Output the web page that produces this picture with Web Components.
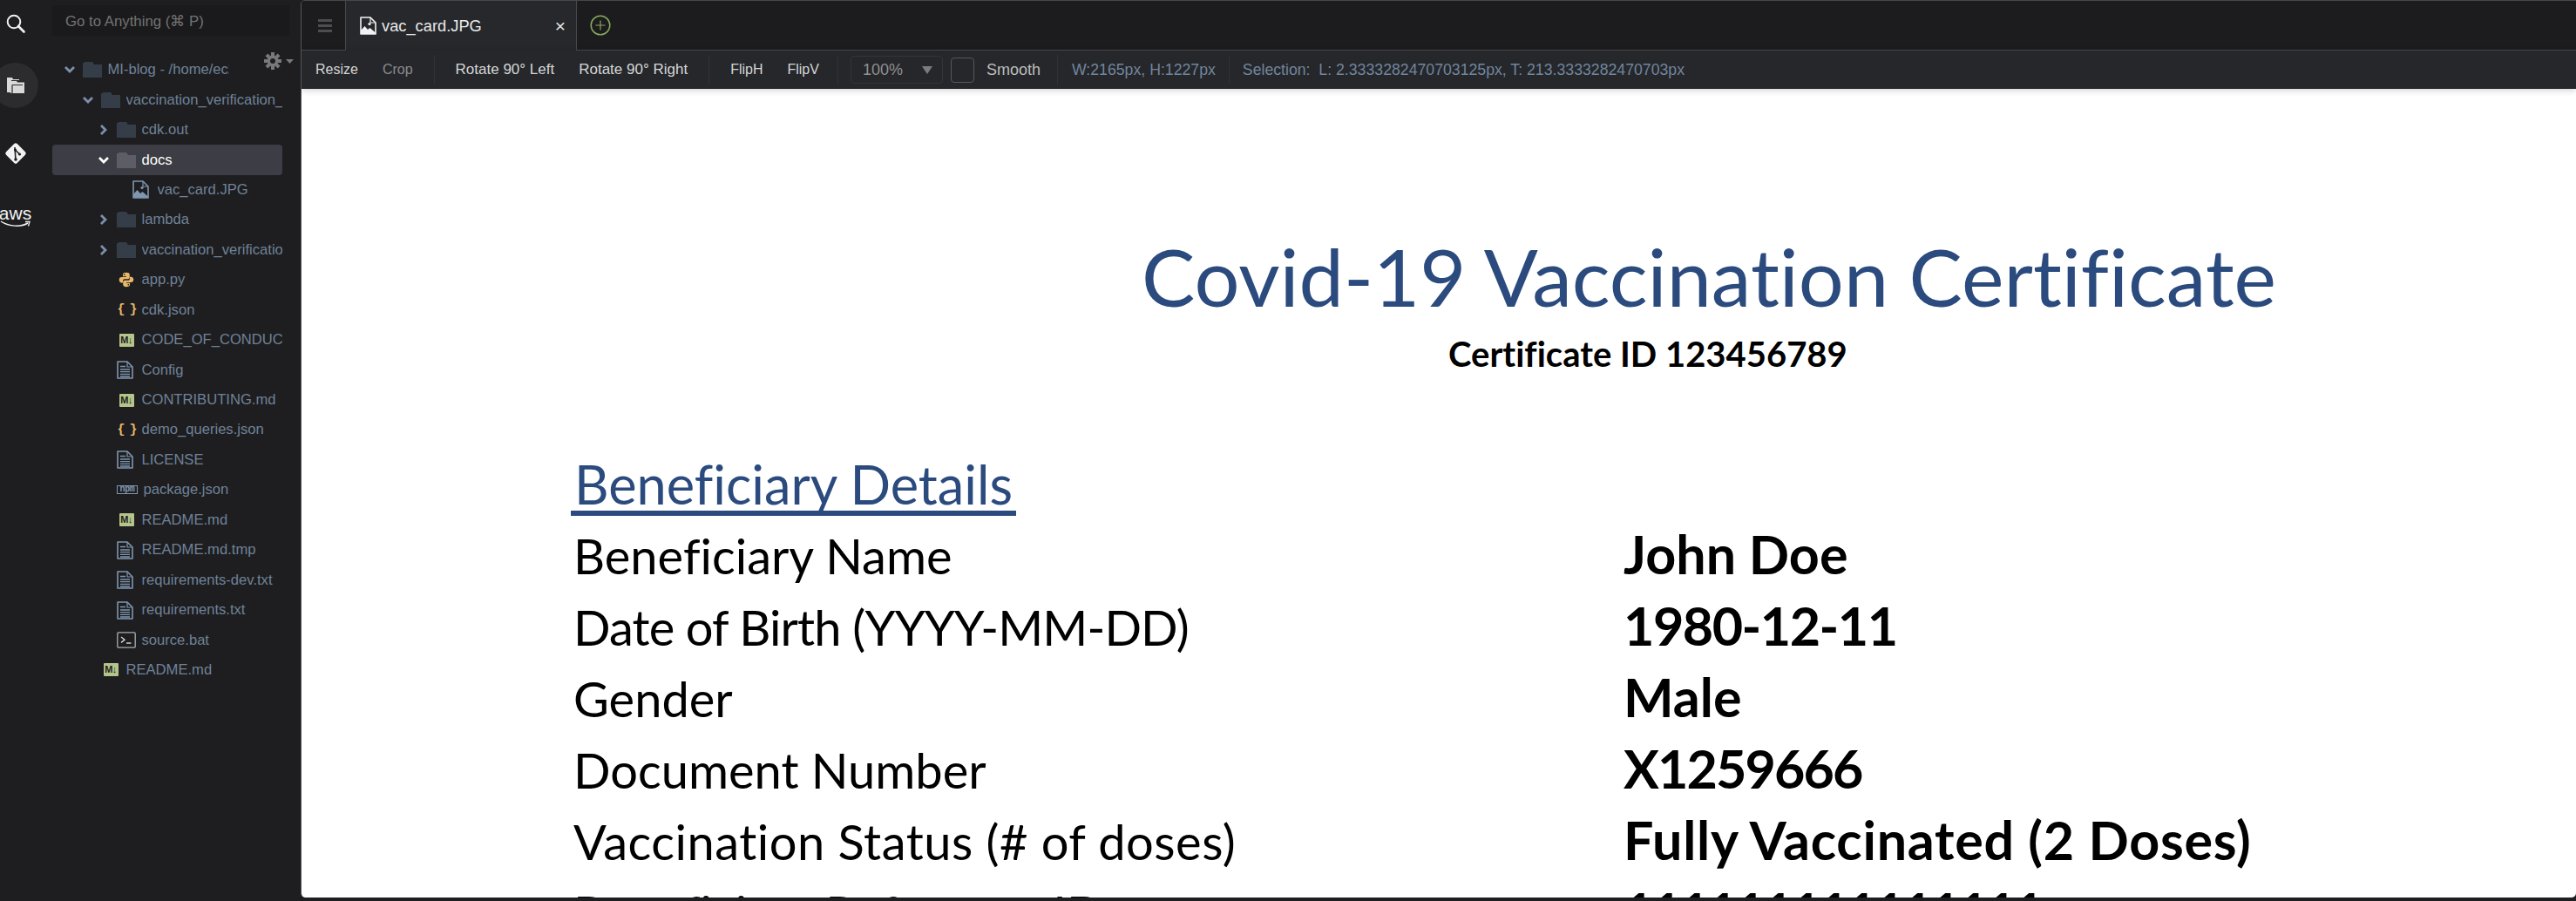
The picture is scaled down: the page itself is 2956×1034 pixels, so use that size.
<!DOCTYPE html>
<html>
<head>
<meta charset="utf-8">
<title>vac_card.JPG</title>
<style>
  html, body { margin: 0; height: 100%; background: #1e1e20; overflow: hidden; }
</style>
</head>
<body>
<app-shell>
  <side-rail slot="rail"></side-rail>
  <file-panel slot="panel">
    <tree-row indent="12" chev="open" icon="folder" clip="139">MI-blog - /home/ec2-user</tree-row>
    <tree-row indent="33" chev="open" icon="folder">vaccination_verification_sample</tree-row>
    <tree-row indent="51" chev="closed" icon="folder">cdk.out</tree-row>
    <tree-row indent="51" chev="open" icon="folder" selected>docs</tree-row>
    <tree-row indent="69" icon="image">vac_card.JPG</tree-row>
    <tree-row indent="51" chev="closed" icon="folder">lambda</tree-row>
    <tree-row indent="51" chev="closed" icon="folder">vaccination_verification_sample</tree-row>
    <tree-row indent="51" icon="python">app.py</tree-row>
    <tree-row indent="51" icon="json">cdk.json</tree-row>
    <tree-row indent="51" icon="md">CODE_OF_CONDUCT.md</tree-row>
    <tree-row indent="51" icon="file">Config</tree-row>
    <tree-row indent="51" icon="md">CONTRIBUTING.md</tree-row>
    <tree-row indent="51" icon="json">demo_queries.json</tree-row>
    <tree-row indent="51" icon="file">LICENSE</tree-row>
    <tree-row indent="51" icon="npm">package.json</tree-row>
    <tree-row indent="51" icon="md">README.md</tree-row>
    <tree-row indent="51" icon="file">README.md.tmp</tree-row>
    <tree-row indent="51" icon="file">requirements-dev.txt</tree-row>
    <tree-row indent="51" icon="file">requirements.txt</tree-row>
    <tree-row indent="51" icon="term">source.bat</tree-row>
    <tree-row indent="33" icon="md">README.md</tree-row>
  </file-panel>
  <editor-pane slot="main">
    <tab-strip slot="tabs">vac_card.JPG</tab-strip>
    <image-tools slot="tools"></image-tools>
    <doc-sheet slot="doc">
      <doc-row name="Beneficiary Name">John Doe</doc-row>
      <doc-row name="Date of Birth (YYYY-MM-DD)" ktrack="-.87" vtrack="-1.5">1980-12-11</doc-row>
      <doc-row name="Gender">Male</doc-row>
      <doc-row name="Document Number" vtrack="-1.9">X1259666</doc-row>
      <doc-row name="Vaccination Status (# of doses)" ktrack=".49" vtrack=".72">Fully Vaccinated (2 Doses)</doc-row>
      <doc-row name="Beneficiary Reference ID" vtrack="-3.4">111111111111111</doc-row>
    </doc-sheet>
  </editor-pane>
</app-shell>

<script>
const UI_FONT = '"Liberation Sans", Arial, sans-serif';

// small svg icons for the tree, keyed by the icon attribute
const pageOutline = (c) => `<path d="M1 1h11l6 6v13H1z" fill="none" stroke="${c}" stroke-width="1.6" stroke-linejoin="round"/><path d="M12 1v6h6" fill="none" stroke="${c}" stroke-width="1.2"/>`;
const imageIcon = (c) => `<svg width="19" height="21" viewBox="0 0 19 21">${pageOutline(c)}<circle cx="11" cy="8.5" r="1.6" fill="${c}"/><path d="M1 20v-4l4.5-5 3.5 4 2.5-2 7 6v1z" fill="${c}"/></svg>`;

const ICONS = {
  folder: (c) => `<svg width="22" height="18" viewBox="0 0 22 18"><path d="M0 18V1h2V0h9l2 3h9v15z" fill="${c}"/></svg>`,
  image: () => imageIcon("#7f96b0"),
  file: () => `<svg width="19" height="21" viewBox="0 0 19 21">${pageOutline("#7f96b0")}<path d="M4 6.5h6M4 10h11M4 12.7h11M4 15.4h11M4 18h11" stroke="#7f96b0" stroke-width="1.3"/></svg>`,
  term: () => `<svg width="22" height="19" viewBox="0 0 22 19"><rect x=".8" y=".8" width="20.4" height="17.4" rx="1.2" fill="none" stroke="#a9adb3" stroke-width="1.3"/><path d="M5 6l4 3.2-4 3.2" fill="none" stroke="#d5d7da" stroke-width="1.4"/><path d="M11 13h5.5" stroke="#d5d7da" stroke-width="1.4"/></svg>`,
  python: () => `<svg width="18" height="18" viewBox="0 0 24 24"><path id="p" fill="#e8b76c" d="M12 1C8.5 1 6.6 2 6.6 4.200V7H12v1H4.500C2.400 8 1 9.700 1 12.200S2.400 16.500 4.500 16.500H6.700v-2.800c0-1.600 1.300-2.800 2.800-2.800h5c1.400 0 2.500-1.100 2.500-2.500V4.200C17 2 15.300 1 12 1z"/><use href="#p" transform="rotate(180 12 12)"/><circle cx="9" cy="4.200" r="1.100" fill="#1e1e20"/><circle cx="15" cy="19.800" r="1.100" fill="#1e1e20"/></svg>`
};

customElements.define("app-shell", class extends HTMLElement {
  constructor() {
    super();
    this.attachShadow({ mode: "open" }).innerHTML = `
      <style>
        :host { display: grid; grid-template-columns: 60px 285px 1fr; height: 1034px; background: #1e1e20; font-family: ${UI_FONT}; overflow: hidden; }
      </style>
      <slot name="rail"></slot>
      <slot name="panel"></slot>
      <slot name="main"></slot>`;
  }
});

customElements.define("rail-item", class extends HTMLElement {
  constructor() {
    super();
    this.attachShadow({ mode: "open" }).innerHTML = `
      <style>
        :host { display: flex; flex-direction: column; align-items: center; justify-content: center; width: 53px; height: 52px; margin-left: -9px; border-radius: 50%; color: #f2f2f2; }
        :host([active]) { background: #2c2c2e; }
      </style>
      <slot></slot>`;
  }
});

customElements.define("side-rail", class extends HTMLElement {
  constructor() {
    super();
    this.attachShadow({ mode: "open" }).innerHTML = `
      <style>
        :host { display: flex; flex-direction: column; padding-top: 1px; overflow: hidden; }
        .aws { font: 21px/16px "Liberation Sans", sans-serif; color: #f2f2f2; margin-top: -2px; }
        svg { display: block; }
      </style>
      <rail-item>
        <svg width="24" height="24" viewBox="0 0 24 24"><circle cx="10" cy="10" r="7.300" fill="none" stroke="#f2f2f2" stroke-width="2"/><path d="M15 15l6.500 6.500" stroke="#f2f2f2" stroke-width="2.600" stroke-linecap="round"/></svg>
      </rail-item>
      <rail-item active style="margin-top:19px">
        <svg width="22" height="20" viewBox="0 0 22 20"><path d="M1 1h6l1 2h7v1H6v14H1z" fill="#d9d9d9"/><path d="M5 7V5h7l1 1.500h8V19H5z" fill="#d9d9d9"/><path d="M7 9.500h12M7 9.500V19" stroke="#2c2c2e" stroke-width="1.200"/></svg>
      </rail-item>
      <rail-item style="margin-top:26px">
        <svg width="28" height="28" viewBox="0 0 28 28"><rect x="5" y="5" width="18" height="18" rx="2.500" transform="rotate(45 14 14)" fill="#f2f2f2"/><path d="M13 7l1 15M13.500 10l5 5" stroke="#1e1e20" stroke-width="1.600" fill="none"/><circle cx="13.500" cy="10" r="1.600" fill="#1e1e20"/><circle cx="18.500" cy="15" r="1.600" fill="#1e1e20"/><circle cx="14" cy="21" r="1.800" fill="#1e1e20"/></svg>
      </rail-item>
      <rail-item style="margin-top:22px">
        <span class="aws">aws</span>
        <svg width="36" height="9" viewBox="0 0 36 9"><path d="M1 1c9 6 23 7 31 2" fill="none" stroke="#f2f2f2" stroke-width="1.500"/><path d="M29 1.500h5l-1.500 5" fill="none" stroke="#f2f2f2" stroke-width="1.300"/></svg>
      </rail-item>`;
  }
});

customElements.define("file-panel", class extends HTMLElement {
  constructor() {
    super();
    this.attachShadow({ mode: "open" }).innerHTML = `
      <style>
        :host { display: block; position: relative; }
        .go { box-sizing: border-box; height: 35px; margin: 6px 13px 0 0; padding-left: 15px; background: #1a1a1c; color: #737373; font-size: 16.800px; line-height: 37px; }
        .tree { margin-top: 22px; width: 264px; display: flex; flex-direction: column; }
        .gear { position: absolute; left: 243px; top: 60px; display: flex; align-items: center; gap: 5px; }
      </style>
      <div class="go">Go to Anything (⌘ P)</div>
      <div class="gear">
        <svg width="20" height="20" viewBox="0 0 20 20"><g fill="#77797c"><circle cx="10" cy="10" r="6.500"/><path id="t" d="M8 0h4v4H8z"/><use href="#t" transform="rotate(45 10 10)"/><use href="#t" transform="rotate(90 10 10)"/><use href="#t" transform="rotate(135 10 10)"/><use href="#t" transform="rotate(180 10 10)"/><use href="#t" transform="rotate(225 10 10)"/><use href="#t" transform="rotate(270 10 10)"/><use href="#t" transform="rotate(315 10 10)"/></g><circle cx="10" cy="10" r="3" fill="#1e1e20"/></svg>
        <svg width="9" height="5" viewBox="0 0 9 5"><path d="M0 0h9L4.500 5z" fill="#77797c"/></svg>
      </div>
      <div class="tree"><slot></slot></div>`;
  }
});

customElements.define("tree-row", class extends HTMLElement {
  constructor() {
    super();
    const sel = this.hasAttribute("selected");
    const chev = this.getAttribute("chev");
    const kind = this.getAttribute("icon");
    const c = sel ? "#fff" : "#7b91ab";
    let arrow = "";
    if (chev == "open") arrow = `<svg width="14" height="10" viewBox="0 0 14 10"><path d="M2 2l5 5 5-5" fill="none" stroke="${c}" stroke-width="2.800"/></svg>`;
    if (chev == "closed") arrow = `<svg width="10" height="14" viewBox="0 0 10 14"><path d="M2 2l5 5-5 5" fill="none" stroke="${c}" stroke-width="2.800"/></svg>`;
    let icon;
    if (kind == "folder") icon = ICONS.folder(sel ? "#5c5d65" : "#353d49");
    else if (kind == "md") icon = `<span class="md">M↓</span>`;
    else if (kind == "json") icon = `<span class="json">{ }</span>`;
    else if (kind == "npm") icon = `<span class="npm">npm</span>`;
    else icon = ICONS[kind]();
    const clip = this.getAttribute("clip");
    this.attachShadow({ mode: "open" }).innerHTML = `
      <style>
        :host { display: flex; align-items: center; box-sizing: border-box; height: 34.45px; padding-left: ${this.getAttribute("indent")}px; border-radius: 4px; color: #6f8298; font-size: 16.600px; }
        :host([selected]) { background: #3c3d45; color: #fff; }
        .chev { flex: 0 0 16px; display: flex; justify-content: center; }
        .icon { flex: 0 0 22px; margin: 0 6.500px 0 7px; display: flex; justify-content: center; align-items: center; }
        .icon.left { justify-content: flex-start; }
        .label { flex: 1; min-width: 0; overflow: hidden; white-space: nowrap; ${clip ? `max-width:${clip}px;flex:none;` : ""} }
        .md { background: #b5c48a; color: #1e1e20; font: bold 11px/15px "Liberation Sans", sans-serif; width: 17px; height: 15px; border-radius: 1px; text-align: center; letter-spacing: -.5px; }
        .json { color: #e8b76c; font: bold 15px "Liberation Mono", monospace; letter-spacing: -2px; }
        .npm { box-sizing: border-box; width: 24px; height: 10px; border: 1px solid #7f96b0; color: #7f96b0; font: bold 10px/7px "Liberation Mono", monospace; letter-spacing: -.4px; text-align: center; flex: none; }
        svg { display: block; }
      </style>
      <span class="chev">${arrow}</span>
      <span class="icon ${kind == "file" || kind == "image" || kind == "npm" ? "left" : ""}">${icon}</span>
      <span class="label"><slot></slot></span>`;
  }
});

customElements.define("editor-pane", class extends HTMLElement {
  constructor() {
    super();
    this.attachShadow({ mode: "open" }).innerHTML = `
      <style>
        :host { display: flex; flex-direction: column; height: 1030px; box-sizing: border-box; border-top: 1px solid #46464c; border-left: 1px solid #55555a; border-radius: 5px 0 5px 5px; background: #1c1c1e; overflow: hidden; }
      </style>
      <slot name="tabs"></slot>
      <slot name="tools"></slot>
      <slot name="doc"></slot>`;
  }
});

customElements.define("tab-strip", class extends HTMLElement {
  constructor() {
    super();
    this.attachShadow({ mode: "open" }).innerHTML = `
      <style>
        :host { display: flex; align-items: stretch; height: 57px; flex: none; background: #1c1c1e; box-sizing: border-box; border-bottom: 1px solid #48484e; }
        .menu { width: 51px; display: flex; align-items: center; justify-content: center; padding-left: 4px; border-right: 1px solid #48484e; box-sizing: border-box; }
        .tab { position: relative; width: 265px; height: 57px; box-sizing: border-box; display: flex; align-items: center; padding-left: 16px; background: #26282c; border-right: 1px solid #48484e; color: #e9e9e9; font-size: 18.300px; }
        .name { margin-left: 6px; flex: 1; }
        .x { margin-right: 12px; font-size: 21px; color: #e9e9e9; }
        .add { margin-left: 15px; align-self: center; }
        svg { display: block; }
      </style>
      <div class="menu"><svg width="16" height="15" viewBox="0 0 16 15"><path d="M0 1.500h16M0 7.500h16M0 13.500h16" stroke="#4c4d50" stroke-width="3"/></svg></div>
      <div class="tab">${imageIcon("#f2f2f2")}<span class="name"><slot></slot></span><span class="x">×</span></div>
      <svg class="add" width="24" height="24" viewBox="0 0 24 24"><circle cx="12" cy="12" r="10.800" fill="none" stroke="#86a85c" stroke-width="1.500"/><path d="M12 6.500v11M6.500 12h11" stroke="#86a85c" stroke-width="1.200"/></svg>`;
  }
});

customElements.define("image-tools", class extends HTMLElement {
  constructor() {
    super();
    this.attachShadow({ mode: "open" }).innerHTML = `
      <style>
        :host { display: flex; align-items: center; height: 44px; flex: none; box-sizing: border-box; padding-left: 16px; background: #25272b; color: #d6d6d6; font-size: 16px; white-space: pre; position: relative; z-index: 1; box-shadow: 0 2px 7px rgba(0,0,0,.18); }
        .group { display: flex; align-items: center; gap: 28px; }
        .group.rotate { font-size: 17px; }
        .sep { width: 1px; height: 34px; background: #303236; margin: 0 24px; }
        .sep.tight { margin-left: 21px; }
        .dim { color: #8b8b8b; }
        .zoom { box-sizing: border-box; width: 106px; height: 32px; margin-left: -10px; padding: 0 11px 0 13px; display: flex; align-items: center; justify-content: space-between; border: 1px solid #333539; border-radius: 4px; color: #909090; font-size: 18px; }
        .tri { border: 6px solid transparent; border-top: 9px solid #7c7c7c; border-bottom: 0; }
        .box { width: 27px; height: 29px; box-sizing: border-box; margin: 0 14px 0 9px; border: 1px solid #55575c; border-radius: 4px; }
        .smooth { color: #bdbdbd; margin-right: -5px; font-size: 18px; }
        .info { color: #72859c; font-size: 17.700px; }
        .sep.small { margin: 0 15px; }
      </style>
      <div class="group"><span>Resize</span><span class="dim">Crop</span></div>
      <i class="sep"></i>
      <div class="group rotate"><span>Rotate 90° Left</span><span>Rotate 90° Right</span></div>
      <i class="sep"></i>
      <div class="group"><span>FlipH</span><span>FlipV</span></div>
      <i class="sep tight"></i>
      <div class="zoom"><span>100%</span><i class="tri"></i></div>
      <i class="box"></i><span class="smooth">Smooth</span>
      <i class="sep"></i>
      <span class="info" style="margin-left:-8px">W:2165px, H:1227px</span>
      <i class="sep small"></i>
      <span class="info">Selection:  L: 2.3333282470703125px, T: 213.3333282470703px</span>`;
  }
});

customElements.define("doc-sheet", class extends HTMLElement {
  constructor() {
    super();
    this.attachShadow({ mode: "open" }).innerHTML = `
      <style>
        :host { display: block; flex: 1; min-height: 0; overflow: hidden; background: #fff; font-family: Lato, sans-serif; color: #000; font-variant-ligatures: none; }
        h1 { margin: 165px 0 0 964px; font-size: 91.800px; line-height: 100px; font-weight: 400; color: #2b4b7e; white-space: nowrap; }
        h2 { margin: 14.500px 0 0 1316px; font-size: 40px; line-height: 48px; font-weight: 700; white-space: nowrap; }
        h3 { display: block; width: fit-content; margin: 94px 0 0 309px; padding: 0 4px; font-size: 61.300px; line-height: 62px; font-weight: 400; color: #2b4b7e; border-bottom: 6px solid #2b4b7e; white-space: nowrap; }
        .rows { display: flex; flex-direction: column; margin: 3px 0 0 312px; }
      </style>
      <h1>Covid-19 Vaccination Certificate</h1>
      <h2>Certificate ID 123456789</h2>
      <h3>Beneficiary Details</h3>
      <div class="rows"><slot></slot></div>`;
  }
});

customElements.define("doc-row", class extends HTMLElement {
  constructor() {
    super();
    const kt = this.getAttribute("ktrack") || 0;
    const vt = this.getAttribute("vtrack") || 0;
    this.attachShadow({ mode: "open" }).innerHTML = `
      <style>
        :host { display: grid; grid-template-columns: 1205px 1fr; align-items: baseline; height: 82px; line-height: 82px; white-space: nowrap; }
        .k { font-size: 56px; letter-spacing: ${kt}px; }
        .v { font-size: 61px; font-weight: 700; letter-spacing: ${vt}px; }
      </style>
      <span class="k">${this.getAttribute("name")}</span>
      <span class="v"><slot></slot></span>`;
  }
});
</script>
</body>
</html>
